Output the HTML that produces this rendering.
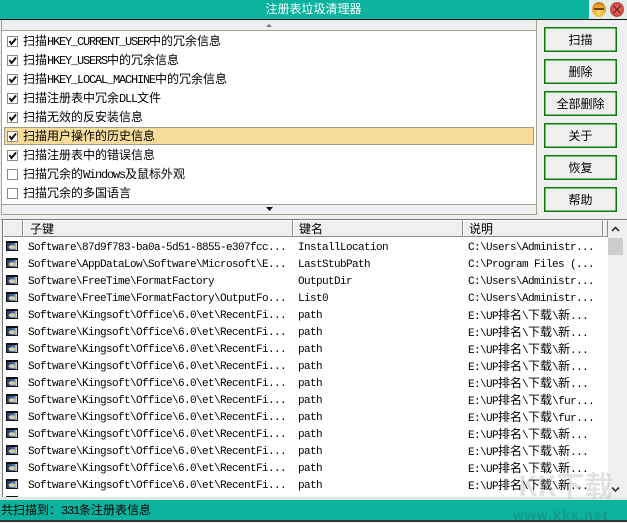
<!DOCTYPE html>
<html><head><meta charset="utf-8"><style>
html,body{margin:0;padding:0}
body{width:627px;height:522px;overflow:hidden;position:relative;background:#efefef;font:12px/17px "WenQuanYi Zen Hei","Noto Sans CJK SC",sans-serif;color:#000}
div{position:absolute;box-sizing:border-box;white-space:nowrap}
.l{font-family:"Liberation Mono",monospace;font-size:11px;letter-spacing:-.6px}
.t .l,.s .l{font-size:12px;letter-spacing:-1.2px}
.c{left:7px;width:11px;height:11px;border:1px solid #8f8a7e;background:#fff}
.c svg{position:absolute;left:0;top:0}
.t{left:23px;height:17px;margin-top:-1px}
.b{left:544px;width:73px;height:25px;border:1px solid #0a7d0a;box-shadow:inset 0 0 0 .5px #0a7d0a;background:#efefef;text-align:center;line-height:24px}
.h{top:220px;height:17px;background:#efefef;border:1px solid #8a8a8a;border-left-color:#fff;border-top-color:#fff;line-height:15px}
.r{left:0;width:608px;height:17px;line-height:17px}
.r i{position:absolute;left:6px;top:2px;width:12px;height:10px;border:1px solid #111;border-top-width:2px;background:radial-gradient(ellipse 4px 2.500px at 50% 60%,#d8cfa0 60%,transparent 100%),linear-gradient(90deg,#1c3a76,#4a6aa0 70%,#dfe4ee);box-sizing:border-box}
.r span{position:absolute;top:1px}
.r span.x{top:-1px}
.r span.x span{position:static}
.k{left:28px}.n{left:298px}.d{left:468px}
</style></head><body>
<div style="left:0;top:0;width:627px;height:19px;background:#0bb39f"></div>
<div style="left:0;top:0;width:627px;height:19px;line-height:18px;text-align:center;color:#fff">注册表垃圾清理器</div>
<div style="left:589px;top:0;width:38px;height:19px;background:#e4eee9"></div>
<div style="left:592px;top:2px;width:14px;height:15px;border-radius:50%;background:radial-gradient(circle at 50% 72%,#fbe070,#e89a20 60%,#8c6238)"></div>
<div style="left:594px;top:8px;width:10px;height:2px;background:#6a4210"></div>
<div style="left:610px;top:2px;width:14px;height:15px;border-radius:50%;background:radial-gradient(circle,#e98a80,#c8443e 65%,#7c4644)"></div>
<svg style="position:absolute;left:610px;top:2px" width="14" height="15"><path d="M3.500 4L10.500 11M10.500 4L3.500 11" stroke="#8a2a26" stroke-width="1.800"/></svg>
<div style="left:0;top:19px;width:627px;height:1px;background:#111"></div>

<div style="left:1px;top:20px;width:536px;height:195px;background:#fff;border-left:1px solid #a89f8f;border-right:1px solid #a89f8f;border-bottom:1px solid #a89f8f"></div>
<div style="left:2px;top:20px;width:534px;height:11px;background:#efefef;border-bottom:1px solid #a89f8f"></div>
<div style="left:2px;top:204px;width:534px;height:10px;background:#efefef;border-top:1px solid #a89f8f"></div>
<svg style="position:absolute;left:266px;top:23px" width="8" height="5"><path d="M0 4H6L3 1Z" fill="#777"/></svg>
<svg style="position:absolute;left:266px;top:207px" width="8" height="5"><path d="M0 0H7L3.500 4Z" fill="#111"/></svg>

<div style="left:4px;top:127px;width:530px;height:18px;background:#f6dd9b;border:1px solid #a09a88"></div>

<div class="c" style="top:36px"><svg width="9" height="9"><path d="M1.500 4L3.500 7L8 1.500" fill="none" stroke="#111" stroke-width="2"/></svg></div>
<div class="t" style="top:33px">扫描<span class="l">HKEY_CURRENT_USER</span>中的冗余信息</div>
<div class="c" style="top:55px"><svg width="9" height="9"><path d="M1.500 4L3.500 7L8 1.500" fill="none" stroke="#111" stroke-width="2"/></svg></div>
<div class="t" style="top:52px">扫描<span class="l">HKEY_USERS</span>中的冗余信息</div>
<div class="c" style="top:74px"><svg width="9" height="9"><path d="M1.500 4L3.500 7L8 1.500" fill="none" stroke="#111" stroke-width="2"/></svg></div>
<div class="t" style="top:71px">扫描<span class="l">HKEY_LOCAL_MACHINE</span>中的冗余信息</div>
<div class="c" style="top:93px"><svg width="9" height="9"><path d="M1.500 4L3.500 7L8 1.500" fill="none" stroke="#111" stroke-width="2"/></svg></div>
<div class="t" style="top:90px">扫描注册表中冗余<span class="l">DLL</span>文件</div>
<div class="c" style="top:112px"><svg width="9" height="9"><path d="M1.500 4L3.500 7L8 1.500" fill="none" stroke="#111" stroke-width="2"/></svg></div>
<div class="t" style="top:109px">扫描无效的反安装信息</div>
<div class="c" style="top:131px"><svg width="9" height="9"><path d="M1.500 4L3.500 7L8 1.500" fill="none" stroke="#111" stroke-width="2"/></svg></div>
<div class="t" style="top:128px">扫描用户操作的历史信息</div>
<div class="c" style="top:150px"><svg width="9" height="9"><path d="M1.500 4L3.500 7L8 1.500" fill="none" stroke="#111" stroke-width="2"/></svg></div>
<div class="t" style="top:147px">扫描注册表中的错误信息</div>
<div class="c" style="top:169px"></div>
<div class="t" style="top:166px">扫描冗余的<span class="l">Windows</span>及鼠标外观</div>
<div class="c" style="top:188px"></div>
<div class="t" style="top:185px">扫描冗余的多国语言</div>

<div class="b" style="top:27px">扫描</div>
<div class="b" style="top:59px">删除</div>
<div class="b" style="top:91px">全部删除</div>
<div class="b" style="top:123px">关于</div>
<div class="b" style="top:155px">恢复</div>
<div class="b" style="top:187px">帮助</div>

<div style="left:1px;top:219px;width:626px;height:1px;background:#777"></div>
<div style="left:2px;top:220px;width:606px;height:277px;background:#fff;border-left:1px solid #777"></div>
<div class="h" style="left:3px;width:20px"></div>
<div class="h" style="left:23px;width:270px;padding-left:6px">子键</div>
<div class="h" style="left:293px;width:170px;padding-left:5px">键名</div>
<div class="h" style="left:463px;width:140px;padding-left:5px">说明</div>
<div class="h" style="left:603px;width:5px"></div>

<div style="left:0;top:238px;width:608px;height:259px;overflow:hidden">
<div class="r" style="top:1px"><i></i><span class="k l">Software\87d9f783-ba0a-5d51-8855-e307fcc...</span><span class="n l">InstallLocation</span><span class="d l">C:\Users\Administr...</span></div>
<div class="r" style="top:18px"><i></i><span class="k l">Software\AppDataLow\Software\Microsoft\E...</span><span class="n l">LastStubPath</span><span class="d l">C:\Program Files (...</span></div>
<div class="r" style="top:35px"><i></i><span class="k l">Software\FreeTime\FormatFactory</span><span class="n l">OutputDir</span><span class="d l">C:\Users\Administr...</span></div>
<div class="r" style="top:52px"><i></i><span class="k l">Software\FreeTime\FormatFactory\OutputFo...</span><span class="n l">List0</span><span class="d l">C:\Users\Administr...</span></div>
<div class="r" style="top:69px"><i></i><span class="k l">Software\Kingsoft\Office\6.0\et\RecentFi...</span><span class="n l">path</span><span class="d x"><span class="l">E:\UP</span>排名<span class="l">\</span>下载<span class="l">\</span>新<span class="l">...</span></span></div>
<div class="r" style="top:86px"><i></i><span class="k l">Software\Kingsoft\Office\6.0\et\RecentFi...</span><span class="n l">path</span><span class="d x"><span class="l">E:\UP</span>排名<span class="l">\</span>下载<span class="l">\</span>新<span class="l">...</span></span></div>
<div class="r" style="top:103px"><i></i><span class="k l">Software\Kingsoft\Office\6.0\et\RecentFi...</span><span class="n l">path</span><span class="d x"><span class="l">E:\UP</span>排名<span class="l">\</span>下载<span class="l">\</span>新<span class="l">...</span></span></div>
<div class="r" style="top:120px"><i></i><span class="k l">Software\Kingsoft\Office\6.0\et\RecentFi...</span><span class="n l">path</span><span class="d x"><span class="l">E:\UP</span>排名<span class="l">\</span>下载<span class="l">\</span>新<span class="l">...</span></span></div>
<div class="r" style="top:137px"><i></i><span class="k l">Software\Kingsoft\Office\6.0\et\RecentFi...</span><span class="n l">path</span><span class="d x"><span class="l">E:\UP</span>排名<span class="l">\</span>下载<span class="l">\</span>新<span class="l">...</span></span></div>
<div class="r" style="top:154px"><i></i><span class="k l">Software\Kingsoft\Office\6.0\et\RecentFi...</span><span class="n l">path</span><span class="d x"><span class="l">E:\UP</span>排名<span class="l">\</span>下载<span class="l">\fur...</span></span></div>
<div class="r" style="top:171px"><i></i><span class="k l">Software\Kingsoft\Office\6.0\et\RecentFi...</span><span class="n l">path</span><span class="d x"><span class="l">E:\UP</span>排名<span class="l">\</span>下载<span class="l">\fur...</span></span></div>
<div class="r" style="top:188px"><i></i><span class="k l">Software\Kingsoft\Office\6.0\et\RecentFi...</span><span class="n l">path</span><span class="d x"><span class="l">E:\UP</span>排名<span class="l">\</span>下载<span class="l">\</span>新<span class="l">...</span></span></div>
<div class="r" style="top:205px"><i></i><span class="k l">Software\Kingsoft\Office\6.0\et\RecentFi...</span><span class="n l">path</span><span class="d x"><span class="l">E:\UP</span>排名<span class="l">\</span>下载<span class="l">\</span>新<span class="l">...</span></span></div>
<div class="r" style="top:222px"><i></i><span class="k l">Software\Kingsoft\Office\6.0\et\RecentFi...</span><span class="n l">path</span><span class="d x"><span class="l">E:\UP</span>排名<span class="l">\</span>下载<span class="l">\</span>新<span class="l">...</span></span></div>
<div class="r" style="top:239px"><i></i><span class="k l">Software\Kingsoft\Office\6.0\et\RecentFi...</span><span class="n l">path</span><span class="d x"><span class="l">E:\UP</span>排名<span class="l">\</span>下载<span class="l">\</span>新<span class="l">...</span></span></div>
<div class="r" style="top:256px"><i></i></div>
</div>

<div style="left:608px;top:220px;width:15px;height:277px;background:#efefef"></div>
<div style="left:608px;top:238px;width:15px;height:17px;background:#cdcdcd"></div>
<svg style="position:absolute;left:611px;top:226px" width="9" height="7"><path d="M1 5L4.500 1.500L8 5" fill="none" stroke="#333" stroke-width="1.600"/></svg>
<svg style="position:absolute;left:611px;top:486px" width="9" height="7"><path d="M1 1.500L4.500 5L8 1.500" fill="none" stroke="#333" stroke-width="1.600"/></svg>

<div style="left:0;top:497px;width:627px;height:3px;background:#e6e6e6"></div>
<div class="s" style="left:0;top:500px;width:627px;height:20px;background:#0bb39f;line-height:20px;padding-left:1px">共扫描到：<span class="l">331</span>条注册表信息</div>
<div style="left:0;top:520px;width:627px;height:2px;background:#333"></div>

<div style="left:518px;top:468px;font:bold 28px/34px 'WenQuanYi Zen Hei','Noto Sans CJK SC',sans-serif;color:rgba(120,125,120,.22)">KK下载</div>
<div style="left:513px;top:508px;font:bold 14px/15px 'Liberation Sans',sans-serif;color:rgba(40,110,100,.35);letter-spacing:1px">www.kkx.net</div>
</body></html>
